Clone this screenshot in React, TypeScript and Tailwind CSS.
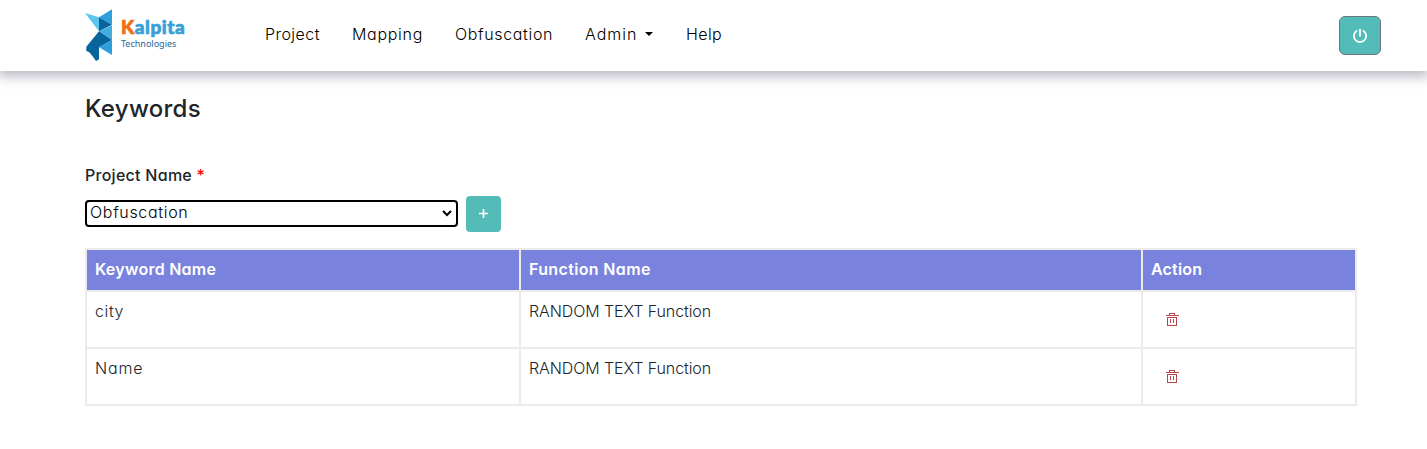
import React from "react";

const rows = [
  { keyword: "city", tracking: "tracking-[0.6px]", fn: "RANDOM TEXT Function" },
  { keyword: "Name", tracking: "tracking-[0.8px]", fn: "RANDOM TEXT Function" },
];

function Logo() {
  return (
    <div className="ml-[85px] flex w-[180px] shrink-0 items-start pt-[9px]">
      <svg width="28" height="53" viewBox="30 27 84 159" className="shrink-0">
        <path d="M30 39L72 52V94Z" fill="#5bc5ee" />
        <path d="M72 52L111 28V74Z" fill="#2d9fda" />
        <path d="M72 52L111 74L72 94Z" fill="#07649c" />
        <path d="M72 94L111 76V120Z" fill="#42addf" />
        <path d="M72 94L111 120L72 142Z" fill="#07649c" />
        <path d="M111 120V165L72 142Z" fill="#2d9fda" />
        <path d="M72 94V178L63 183L54 170L43 157L34 153V140Z" fill="#07649c" />
      </svg>
      <div className="flex flex-col pl-2 pt-[6px]">
        <span className="font-['Lato'] text-[19px] leading-[23px] font-black tracking-[0.55px] text-[#3a9fd8] [-webkit-text-stroke:0.7px_currentColor]">
          <span className="text-[#f36f10]">K</span>alpita
        </span>
        <span className="-mt-px font-['Noto_Sans'] text-[9px] leading-[13px] font-normal text-[#1f6795]">Technologies</span>
      </div>
    </div>
  );
}

function TrashIcon() {
  return (
    <svg width="14" height="14" viewBox="0 0 14 14" fill="none" stroke="#b8434d" strokeWidth="1" shapeRendering="crispEdges">
      <path d="M.5 2.5H13.5M4 .5H10M4.5 2V.5M9.5 2V.5M2.5 4.5H11.5V12.5H2.5ZM5.5 6V10M8.5 6V10" />
    </svg>
  );
}

export default function App() {
  return (
    <div className="h-[449px] overflow-hidden bg-white font-['Inter',sans-serif] text-base font-light text-[#212529] [font-feature-settings:'cv11']">
      <header className="flex h-[71px] bg-white shadow-[0_3px_12px_2px_rgba(40,35,70,0.34)]">
        <Logo />
        <nav className="flex h-[68px] items-center text-black">
          <a className="w-[87px] tracking-[0.45px]">Project</a>
          <a className="w-[103px] tracking-[0.7px]">Mapping</a>
          <a className="w-[130px] tracking-[0.65px]">Obfuscation</a>
          <a className="flex w-[101px] items-center gap-2 tracking-[1px]">
            Admin
            <svg width="8" height="4" viewBox="0 0 8 4"><path d="M0 0H8L4 4Z" /></svg>
          </a>
          <a className="tracking-[0.4px]">Help</a>
        </nav>
        <button className="mt-4 mr-[46px] ml-auto flex h-[39px] w-[42px] items-center justify-center rounded-[6px] border border-[#6c757d] bg-[#53bbb8]">
          <svg width="14" height="14" viewBox="0 0 14 14" fill="none" stroke="white" strokeWidth="1.8">
            <path d="M7 0V7.4M4.2 1.5A6.1 6.1 0 1 0 9.8 1.5" />
          </svg>
        </button>
      </header>
      <main className="ml-[85px] w-[1272px]">
        <h1 className="pt-[20px] text-2xl leading-9 font-medium tracking-[0.3px]">Keywords</h1>
        <label className="mt-[36px] block leading-6 font-medium tracking-[0.27px]">
          Project Name <span className="text-[#f00]">*</span>
        </label>
        <div className="mt-[9px] flex items-center gap-2">
          <div className="mb-px flex h-[27px] w-[373px] items-center justify-between rounded-[4px] border-2 border-black pr-1 pl-[3px] text-black">
            <span className="pb-0.5 leading-[21px] tracking-[0.68px]">Obfuscation</span>
            <svg width="10" height="7" viewBox="0 0 10 7" fill="none" stroke="black" strokeWidth="2"><path d="M1 1L5 5L9 1" /></svg>
          </div>
          <button className="flex h-9 w-[35px] items-center justify-center rounded-[4px] bg-[#53bbb8] pb-px">
            <svg width="9" height="9" viewBox="0 0 9 9" stroke="white" strokeWidth="1.7"><path d="M4.5 0V9M0 4.5H9" /></svg>
          </button>
        </div>
        <table className="mt-4 w-full table-fixed border-collapse border-2 border-[#ebebeb] text-left">
          <colgroup>
            <col className="w-[434px]" />
            <col className="w-[622px]" />
            <col />
          </colgroup>
          <thead>
            <tr className="h-[42px] bg-[#7982dc] text-white">
              <th className="border-2 border-[#ebebeb] px-2 pb-0.5 font-semibold tracking-[0.25px]">Keyword Name</th>
              <th className="border-2 border-[#ebebeb] px-2 pb-0.5 font-semibold tracking-[0.35px]">Function Name</th>
              <th className="border-2 border-[#ebebeb] px-2 pb-0.5 font-semibold tracking-[0.2px]">Action</th>
            </tr>
          </thead>
          <tbody>
            {rows.map((r) => (
              <tr key={r.keyword} className="h-[57px] align-top">
                <td className="border-2 border-[#ebebeb] px-2 pt-[7px]"><span className={r.tracking}>{r.keyword}</span></td>
                <td className="border-2 border-[#ebebeb] px-2 pt-[7px] tracking-[-0.1px]">{r.fn}</td>
                <td className="border-2 border-[#ebebeb] pt-[21px] pl-[22px]"><TrashIcon /></td>
              </tr>
            ))}
          </tbody>
        </table>
      </main>
    </div>
  );
}
